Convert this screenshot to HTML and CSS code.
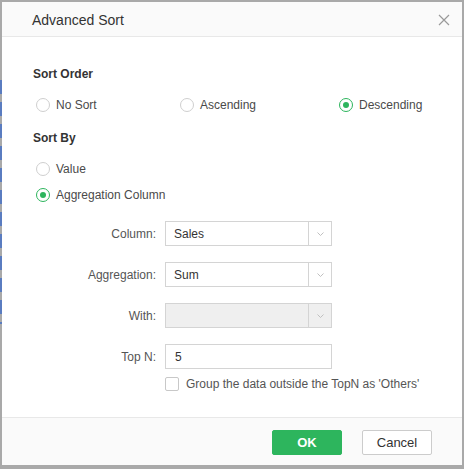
FILE: index.html
```html
<!DOCTYPE html>
<html>
<head>
<meta charset="utf-8">
<link rel="stylesheet" href="styles.css">
</head>
<body>
<div class="dialog">
  <div class="header">
    <span class="title">Advanced Sort</span>
    <svg class="close" width="12" height="12" viewBox="0 0 12 12"><path d="M1 1L11 11M11 1L1 11" stroke="#9a9a9a" stroke-width="1.2" fill="none"/></svg>
  </div>
  <div class="content">
    <div class="section-title first">Sort Order</div>
    <div class="radio-row">
      <label class="radio w1"><span class="dot"></span>No Sort</label>
      <label class="radio w2"><span class="dot"></span>Ascending</label>
      <label class="radio"><span class="dot on"></span>Descending</label>
    </div>
    <div class="section-title second">Sort By</div>
    <label class="radio stack first-stack"><span class="dot"></span>Value</label>
    <label class="radio stack second-stack"><span class="dot on"></span>Aggregation Column</label>

    <div class="form">
      <div class="form-row">
        <span class="flabel">Column:</span>
        <div class="select"><span class="val">Sales</span><span class="arrow"><svg width="9" height="6" viewBox="0 0 9 6"><path d="M1.5 1.5L4.5 4.5L7.5 1.5" stroke="#c0c0c0" fill="none"/></svg></span></div>
      </div>
      <div class="form-row">
        <span class="flabel">Aggregation:</span>
        <div class="select"><span class="val">Sum</span><span class="arrow"><svg width="9" height="6" viewBox="0 0 9 6"><path d="M1.5 1.5L4.5 4.5L7.5 1.5" stroke="#c0c0c0" fill="none"/></svg></span></div>
      </div>
      <div class="form-row">
        <span class="flabel">With:</span>
        <div class="select disabled"><span class="val"></span><span class="arrow"><svg width="9" height="6" viewBox="0 0 9 6"><path d="M1.5 1.5L4.5 4.5L7.5 1.5" stroke="#c0c0c0" fill="none"/></svg></span></div>
      </div>
      <div class="form-row">
        <span class="flabel">Top N:</span>
        <div class="input">5</div>
      </div>
      <div class="check-row">
        <span class="checkbox"></span>
        <span>Group the data outside the TopN as 'Others'</span>
      </div>
    </div>
  </div>
  <div class="footer">
    <button class="btn ok">OK</button>
    <button class="btn cancel">Cancel</button>
  </div>
</div>
</body>
</html>
```
FILE: styles.css
```css
html, body {
  margin: 0;
  padding: 0;
}
body {
  width: 464px;
  height: 469px;
  box-sizing: border-box;
  padding: 2px 2px 4px 2px;
  background-color: #a9a9a9;
  background-image: repeating-linear-gradient(to bottom, #5a7cc0 0, #5a7cc0 14px, #a9a9a9 14px, #a9a9a9 22px);
  background-size: 2px 244px;
  background-position: 0 80px;
  background-repeat: no-repeat;
  font-family: "Liberation Sans", Arial, sans-serif;
  font-size: 12px;
  color: #4a4a4a;
  overflow: hidden;
}
.dialog {
  width: 460px;
  height: 463px;
  background: #fff;
  display: flex;
  flex-direction: column;
}
.header {
  height: 35px;
  box-sizing: border-box;
  background: #fafafa;
  border-bottom: 1px solid #e8e8e8;
  display: flex;
  align-items: center;
  justify-content: space-between;
  padding: 0 12px 0 30px;
  flex: none;
}
.title {
  font-size: 14px;
  color: #333;
  margin-top: 2px;
}
.close {
  display: block;
  margin-top: 2px;
}
.content {
  flex: 1;
  padding: 0 0 0 31px;
}
.section-title {
  font-weight: bold;
  color: #333;
  line-height: 16px;
  height: 16px;
}
.section-title.first {
  margin-top: 29px;
}
.section-title.second {
  margin-top: 17px;
}
.radio-row {
  display: flex;
  margin-top: 15px;
  height: 16px;
}
.radio {
  display: flex;
  align-items: center;
  line-height: 16px;
  height: 16px;
  padding-left: 3px;
  box-sizing: border-box;
}
.radio.w1 { width: 144px; }
.radio.w2 { width: 159px; }
.dot {
  width: 14px;
  height: 14px;
  box-sizing: border-box;
  border: 1px solid #cfcfcf;
  border-radius: 50%;
  margin-right: 6px;
  position: relative;
  flex: none;
}
.dot.on {
  border-color: #2db55d;
}
.dot.on::after {
  content: "";
  position: absolute;
  left: 3px;
  top: 3px;
  width: 6px;
  height: 6px;
  border-radius: 50%;
  background: #2db55d;
}
.stack.first-stack { margin-top: 15px; }
.stack.second-stack { margin-top: 10px; }
.form {
  margin-top: 18px;
  display: flex;
  flex-direction: column;
  gap: 16px;
}
.form-row {
  display: flex;
  align-items: center;
  gap: 9px;
  height: 25px;
}
.flabel {
  width: 123px;
  text-align: right;
  color: #555;
}
.select, .input {
  width: 167px;
  height: 25px;
  box-sizing: border-box;
  border: 1px solid #d4d4d4;
  display: flex;
  align-items: center;
  color: #333;
}
.select .val {
  flex: 1;
  padding-left: 8px;
}
.select .arrow {
  width: 22px;
  height: 100%;
  border-left: 1px solid #d4d4d4;
  display: flex;
  align-items: center;
  justify-content: center;
}
.select.disabled {
  background: #efefef;
}
.input {
  padding-left: 9px;
}
.form-row.topn {
  margin-top: 1px;
}
.check-row {
  display: flex;
  align-items: center;
  margin-top: -9px;
  margin-left: 132px;
  gap: 7px;
  color: #555;
  height: 15px;
}
.checkbox {
  width: 14px;
  height: 14px;
  box-sizing: border-box;
  border: 1px solid #c8c8c8;
  border-radius: 2px;
  background: #fff;
}
.footer {
  flex: none;
  height: 48px;
  box-sizing: border-box;
  border-top: 1px solid #e8e8e8;
  background: #fafafa;
  display: flex;
  align-items: center;
  justify-content: flex-end;
  gap: 20px;
  padding: 0 30px 0 0;
}
.btn {
  width: 70px;
  height: 25px;
  box-sizing: border-box;
  font-family: "Liberation Sans", Arial, sans-serif;
  font-size: 13px;
  border-radius: 2px;
  padding: 0;
  margin-top: 1px;
}
.btn.ok {
  background: #2db55d;
  border: 1px solid #2db55d;
  color: #fff;
  font-weight: bold;
}
.btn.cancel {
  background: #fff;
  border: 1px solid #cccccc;
  color: #333;
}
```
